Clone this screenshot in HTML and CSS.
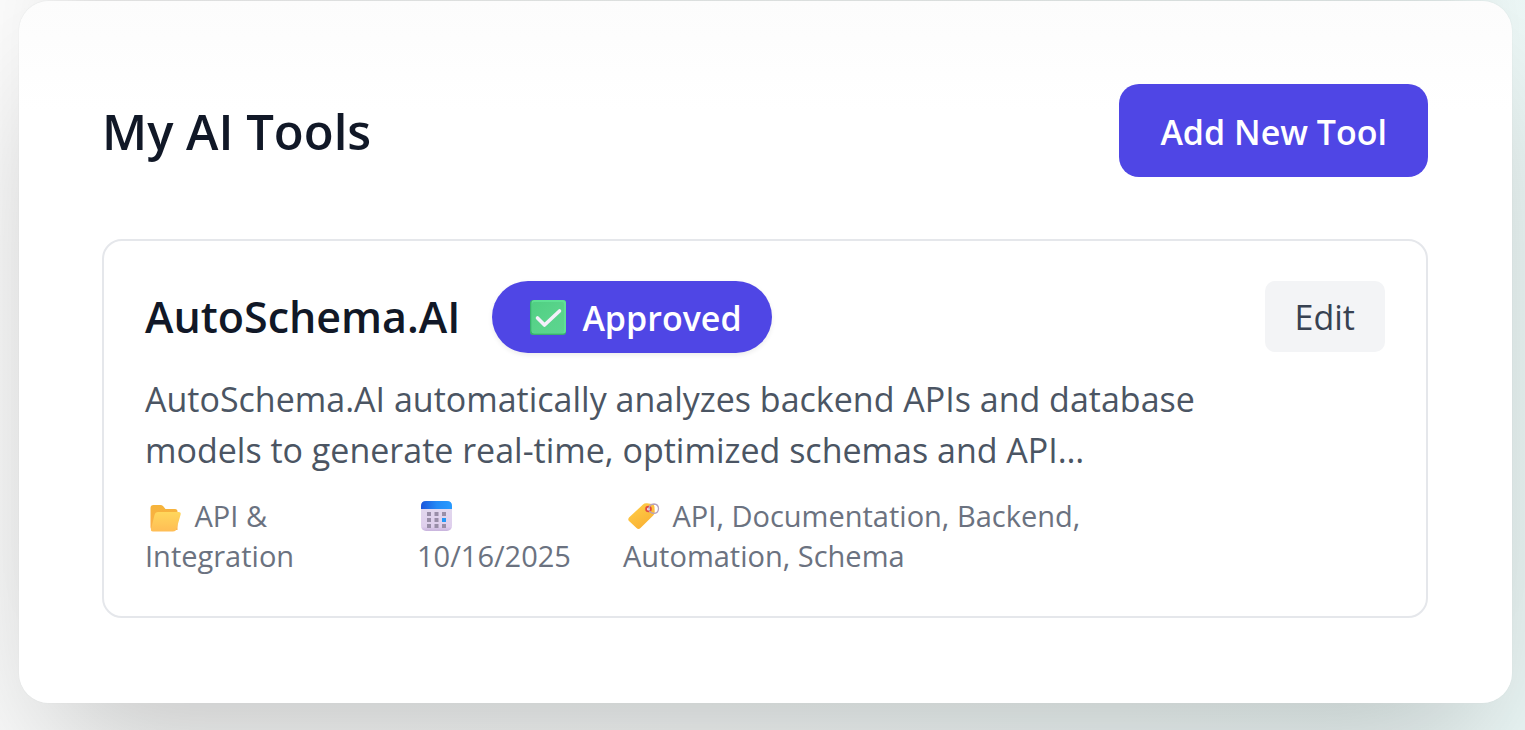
FILE: index.html
```html
<!DOCTYPE html>
<html lang="en">
<head>
<meta charset="utf-8">
<meta name="viewport" content="width=device-width, initial-scale=1">
<title>My AI Tools</title>
<link rel="stylesheet" href="styles.css">
</head>
<body class="page">
<main class="panel">
  <header class="panel-header">
    <h1 class="panel-title">My AI Tools</h1>
    <button class="add-button" type="button">Add New Tool</button>
  </header>
  <article class="tool">
    <div class="tool-body">
      <div class="tool-heading">
        <h2 class="tool-name">AutoSchema.AI</h2>
        <span class="badge">
          <svg class="badge-icon" viewBox="0 0 36 36" aria-hidden="true">
            <defs><linearGradient id="check-fill" x1="0" y1="0" x2="1" y2="1"><stop offset="0" stop-color="#50cf83"/><stop offset=".5" stop-color="#59d38a"/><stop offset="1" stop-color="#5cd590"/></linearGradient></defs>
            <rect width="36" height="35" rx="3" fill="#3bb06f"/>
            <rect x="1.500" width="34.500" height="33.500" rx="3" fill="#5fe094"/>
            <rect x="2" y="2" width="32" height="31" rx="2" fill="url(#check-fill)"/>
            <path d="M7.500 18l7 7L29.500 11" fill="none" stroke="#f5effb" stroke-width="3.600" stroke-linecap="round" stroke-linejoin="round"/>
          </svg>
          Approved
        </span>
      </div>
      <p class="tool-text">AutoSchema.AI automatically analyzes backend APIs and database models to generate real-time, optimized schemas and API…</p>
      <ul class="meta">
        <li class="meta-item">
          <svg class="meta-icon" viewBox="0 0 40 32" aria-hidden="true">
            <defs><linearGradient id="folder-back" x1="0" y1="0" x2="0" y2="1"><stop offset="0" stop-color="#f5b43b"/><stop offset="1" stop-color="#fcae48"/></linearGradient>
            <linearGradient id="folder-front" x1="0" y1="0" x2="0" y2="1"><stop offset="0" stop-color="#ffd75c"/><stop offset="1" stop-color="#ffbd55"/></linearGradient></defs>
            <path d="M5.500 8q0-3 3-3h7q1.500 0 2.500 1l2.500 3H30q2.500 0 2.500 2.500v18.500H8.500q-3 0-3-3z" fill="url(#folder-back)"/>
            <path d="M13 12h20.500q3 0 2 3l-4 14q-.7 2.500-3.500 2.500H8q-2.500 0-2-2.500l3.500-14q.8-3 3.500-3z" fill="url(#folder-front)"/>
          </svg>
          API &amp; Integration
        </li>
        <li class="meta-item">
          <svg class="meta-icon" viewBox="0 0 40 32" aria-hidden="true">
            <defs><linearGradient id="cal-top" x1="0" y1="0" x2="1" y2="0"><stop offset="0" stop-color="#1b55db"/><stop offset=".5" stop-color="#2389f5"/><stop offset="1" stop-color="#279bff"/></linearGradient>
            <linearGradient id="cal-page" x1="0" y1="0" x2="0" y2="1"><stop offset="0" stop-color="#e2dbed"/><stop offset=".85" stop-color="#dfcfed"/><stop offset="1" stop-color="#c8b3dd"/></linearGradient></defs>
            <rect x="4" y="1" width="31" height="30" rx="5" fill="url(#cal-page)"/>
            <path d="M4 9V6q0-5 5-5h21q5 0 5 5v3z" fill="url(#cal-top)"/>
            <path d="M10 12h4v4h-4zm7.500 0h4v4h-4zm7.500 0h4v4h-4zM10 18h4v4h-4zm7.500 0h4v4h-4zM10 24h4v4h-4zm7.500 0h4v4h-4zm7.500 0h4v4h-4z" fill="#998ea8"/>
            <path d="M25 18h4v4h-4z" fill="#2598f7"/>
          </svg>
          10/16/2025
        </li>
        <li class="meta-item">
          <svg class="meta-icon" viewBox="0 0 40 32" aria-hidden="true">
            <defs><linearGradient id="tag-fill" x1=".2" y1="0" x2=".8" y2="1"><stop offset="0" stop-color="#ffce47"/><stop offset="1" stop-color="#f9ae32"/></linearGradient></defs>
            <path d="M20 4.500q1.500-1.500 4-1.200l5 .7q2.500.5 2.500 3l.2 5q0 2-1.500 3.500L17.500 28q-2 2-4 0L6 21q-1.500-1.500 0-3.500z" fill="url(#tag-fill)"/>
            <circle cx="25.500" cy="9" r="2.400" fill="#f1e8ef" stroke="#e0483f" stroke-width="1.800"/>
            <path d="M26 9.500q0-5.500 5-5.500 4.500.3 4.500 4.700-.3 4.600-4.800 4.600-3 0-4.500-2.800" fill="none" stroke="#b7a2bd" stroke-width="1.300"/>
          </svg>
          API, Documentation, Backend, Automation, Schema
        </li>
      </ul>
    </div>
    <button class="edit-button" type="button">Edit</button>
  </article>
</main>
</body>
</html>
```
FILE: styles.css
```css
* {
  box-sizing: border-box;
}

.page {
  margin: 0;
  padding: 1px 13px 27px 19px;
  background: linear-gradient(100deg, #fafafa, #f5f9f8 50%, #ebf7f6);
  font-family: "Open Sans", "Noto Sans", sans-serif;
  color: #111827;
}

.panel {
  padding: 83px 84px 85px 83px;
  border-radius: 30px;
  background: linear-gradient(#fcfcfc, #ffffff 110px);
  box-shadow: 0 0 1px #cfd4d4, 0 64px 128px -31px rgba(0, 0, 0, 0.22), 0 -60px 60px -40px rgba(0, 0, 0, 0.12);
}

.panel-header {
  display: flex;
  align-items: center;
  justify-content: space-between;
  margin-bottom: 62px;
}

.panel-title {
  margin: 0;
  font-size: 49px;
  font-weight: 600;
  line-height: 72px;
}

.add-button {
  padding: 22px 41px 18px;
  border: 0;
  border-radius: 20px;
  background: #4f46e5;
  color: #ffffff;
  font-family: inherit;
  font-size: 34px;
  font-weight: 600;
  line-height: 53px;
}

.tool {
  display: flex;
  align-items: flex-start;
  justify-content: space-between;
  padding: 40px 41px;
  border: 2px solid #e5e7eb;
  border-radius: 20px;
}

.tool-body {
  flex: 0 1 1058px;
}

.tool-heading {
  display: flex;
  align-items: center;
  gap: 32px;
}

.tool-name {
  margin: 0;
  font-size: 43px;
  font-weight: 600;
  line-height: 72px;
}

.badge {
  display: inline-flex;
  align-items: center;
  gap: 16px;
  padding: 2px 30px 0 38px;
  border-radius: 36px;
  background: #4f46e5;
  box-shadow: 0 2px 5px rgba(0, 0, 0, 0.08);
  color: #ffffff;
  font-size: 34px;
  font-weight: 600;
  line-height: 70px;
}

.badge-icon {
  width: 36px;
  height: 36px;
}

.tool-text {
  margin: 21px 0 20px;
  color: #4b5563;
  font-size: 34px;
  line-height: 51px;
}

.meta {
  display: grid;
  grid-template-columns: 231px 165px 1fr;
  gap: 41px;
  margin: 0;
  padding: 0;
  list-style: none;
  color: #6b7280;
  font-size: 29px;
  line-height: 40px;
}

.meta-icon {
  width: 40px;
  height: 32px;
  margin-right: 2px;
  vertical-align: -5px;
}

.edit-button {
  padding: 11px 30px 9px;
  border: 0;
  border-radius: 10px;
  background: #f3f4f6;
  color: #374151;
  font-family: inherit;
  font-size: 34px;
  line-height: 51px;
}
```
